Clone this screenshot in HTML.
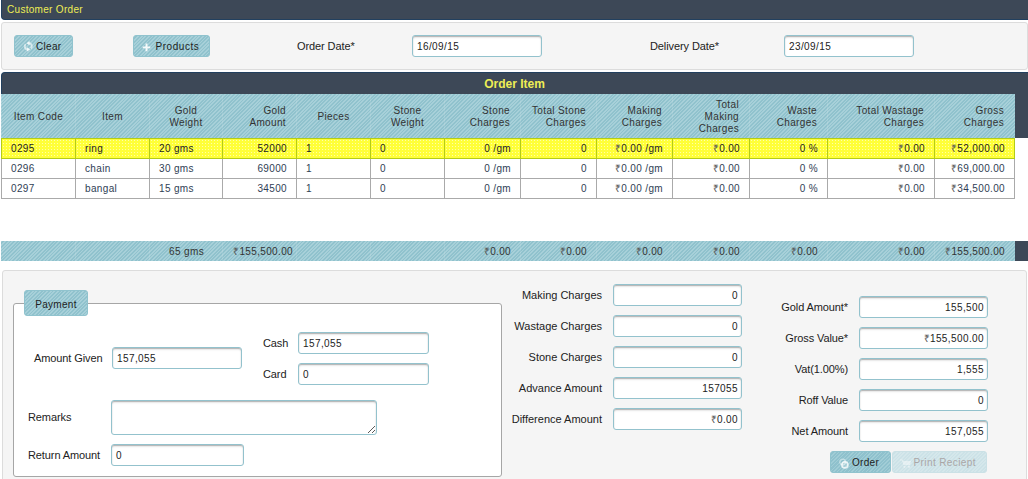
<!DOCTYPE html>
<html>
<head>
<meta charset="utf-8">
<title>Customer Order</title>
<style>
html,body{margin:0;padding:0;}
body{width:1028px;height:479px;position:relative;overflow:hidden;background:#fff;
  font-family:"Liberation Sans",sans-serif;font-size:11px;color:#222;}
.abs{position:absolute;}
.stripe{background-color:#9bc9d3;
  background-image:repeating-linear-gradient(135deg,#a7d0d9 0,#a7d0d9 1.27px,#90c2cd 1.27px,#90c2cd 2.55px);}
.stripe2{background-color:#96c6d0;
  background-image:repeating-linear-gradient(135deg,#a1cdd6 0,#a1cdd6 1.05px,#8fc1cd 1.05px,#8fc1cd 2.55px);}
.hdr{background:#3d4857;}
.j{font-size:10px;letter-spacing:0.3px;}
#title{left:1px;top:0;width:1027px;height:20px;box-sizing:border-box;border-left:1px solid #22405f;border-bottom:1px solid #22405f;border-radius:0 0 0 4px;color:#eeee55;line-height:19px;}
#title span{position:absolute;left:5px;top:0;}
.panel{background:#f5f5f5;border:1px solid #dcdcdc;border-radius:3px;box-sizing:border-box;}
#top{left:1px;top:22px;width:1027px;height:48px;}
.btn{box-sizing:border-box;border:1px solid #90c3ce;border-radius:3px;height:22px;line-height:22px;color:#222;white-space:nowrap;}
.btn span.t{position:absolute;left:21px;top:0;}
.lbl{font-size:11px;line-height:14px;letter-spacing:-0.1px;white-space:nowrap;color:#222;}
.inp{box-sizing:border-box;height:22px;width:130px;border:1px solid #93c2cd;border-radius:3px;background:#fff;
  box-shadow:inset 0 1px 1px #b4b4b4, inset 0 2px 2px rgba(0,0,0,0.08);font-size:10px;letter-spacing:0.4px;line-height:22px;padding:0 4px;color:#222;white-space:nowrap;}
.r{text-align:right;}
.inp.r{padding-right:3px;}
.ru{color:#555;}
/* table */
#gridhead{left:1px;top:72px;width:1027px;height:66px;box-sizing:border-box;border-top:1px solid #22405f;border-left:1px solid #22405f;border-radius:4px 0 0 0;}
#gridtitle{left:1px;top:72px;width:1027px;height:22px;line-height:24px;text-align:center;font-weight:bold;font-size:12px;color:#eeee55;}
#thead{left:1px;top:94px;width:1014px;height:44px;}
.th{position:absolute;top:0;height:44px;padding-top:2px;border-left:1px solid rgba(255,255,255,0.10);font-size:10px;line-height:12px;letter-spacing:0.36px;color:#333;display:flex;align-items:center;box-sizing:border-box;}
.th.c{justify-content:center;text-align:center;}
.th.rr{justify-content:flex-end;text-align:right;padding-right:10px;}
.row{position:absolute;left:0;width:1015px;height:21px;}
.td{position:absolute;top:0;height:21px;box-sizing:border-box;border:1px solid #aaa;
  font-size:10px;line-height:20px;letter-spacing:0.35px;color:#2f3e55;padding:0 9px;white-space:nowrap;}
.td.rr{text-align:right;}
.sel .td{border-color:#b3cc17;background-color:#ffff38;background-image:radial-gradient(circle at 1.5px 1.5px,#ffffa8 0.55px,rgba(255,255,168,0) 1px);background-size:3px 3px;color:#222;}
#foot{left:1px;top:241px;width:1014px;height:20px;}
#footsp{left:1015px;top:241px;width:13px;height:20px;}
.ft{position:absolute;top:0;height:20px;line-height:21px;font-size:10px;letter-spacing:0.35px;color:#333;white-space:nowrap;}
#bottom{left:2px;top:270px;width:1025px;height:215px;}
#fs{left:13px;top:303px;width:489px;height:174px;border:1px solid #a6a6a6;border-radius:3px;background:#fff;box-sizing:border-box;}
#legend{left:24px;top:290px;width:64px;height:26px;line-height:27px;text-align:center;}
.ic{position:absolute;display:block;}
.dis{color:#aaa6a6;border-color:#cbe1e6;background-color:#d0e4e9;background-image:repeating-linear-gradient(135deg,#d5e7eb 0,#d5e7eb 1.27px,#cce2e7 1.27px,#cce2e7 2.55px);}
.fsep{position:absolute;top:0;width:1px;height:20px;background:rgba(255,255,255,0.10);}
</style>
</head>
<body>
<div id="title" class="abs hdr j"><span>Customer Order</span></div>

<div id="top" class="abs panel"></div>
<div class="abs btn stripe j" style="left:14px;top:35px;width:59px;"><svg class="ic" style="left:8.1px;top:5.1px;" width="10.6" height="10.6" viewBox="0 0 11 11"><g fill="none" stroke="#fff" stroke-width="2" opacity="0.6"><path d="M6.4 2.1 A3.4 3.4 0 0 1 8.2 7.8"/><path d="M4.6 8.9 A3.4 3.4 0 0 1 2.8 3.2"/></g><g fill="#fff" opacity="0.88"><path d="M6.8 0 V4.4 L3.6 2.3 Z"/><path d="M4.2 6.6 V11 L7.4 8.7 Z"/></g></svg><span class="t">Clear</span></div>
<div class="abs btn stripe j" style="left:133px;top:35px;width:77px;"><svg class="ic" style="left:7.2px;top:5.2px;" width="12" height="12" viewBox="0 0 12 12"><path d="M1.7 6.4 H9.3 M5.5 2.6 V10.2" stroke="#fff" stroke-width="1.9" fill="none" opacity="0.9"/></svg><span class="t" style="left:21.5px;letter-spacing:0.55px;">Products</span></div>
<div class="abs lbl" style="left:297px;top:39px;">Order Date*</div>
<div class="abs inp" style="left:412px;top:35px;">16/09/15</div>
<div class="abs lbl" style="left:650px;top:39px;">Delivery Date*</div>
<div class="abs inp" style="left:784px;top:35px;">23/09/15</div>

<div id="gridhead" class="abs hdr"></div>
<div id="gridtitle" class="abs">Order Item</div>
<div id="thead" class="abs stripe">
  <div class="th c" style="left:0px;width:74px;"><span>Item Code</span></div>
  <div class="th c" style="left:74px;width:74px;"><span>Item</span></div>
  <div class="th c" style="left:148px;width:73px;"><span>Gold<br>Weight</span></div>
  <div class="th rr" style="left:221px;width:74px;"><span>Gold<br>Amount</span></div>
  <div class="th c" style="left:295px;width:74px;"><span>Pieces</span></div>
  <div class="th c" style="left:369px;width:74px;"><span>Stone<br>Weight</span></div>
  <div class="th rr" style="left:443px;width:76px;"><span>Stone<br>Charges</span></div>
  <div class="th rr" style="left:519px;width:76px;"><span>Total Stone<br>Charges</span></div>
  <div class="th rr" style="left:595px;width:76px;"><span>Making<br>Charges</span></div>
  <div class="th rr" style="left:671px;width:77px;"><span>Total<br>Making<br>Charges</span></div>
  <div class="th rr" style="left:748px;width:78px;"><span>Waste<br>Charges</span></div>
  <div class="th rr" style="left:826px;width:107px;"><span>Total Wastage<br>Charges</span></div>
  <div class="th rr" style="left:933px;width:80px;"><span>Gross<br>Charges</span></div>
</div>
<div class="row" style="top:158px;">
  <div class="td l" style="left:1px;width:75px;">0296</div>
  <div class="td l" style="left:75px;width:75px;">chain</div>
  <div class="td l" style="left:149px;width:74px;">30 gms</div>
  <div class="td rr" style="left:222px;width:75px;">69000</div>
  <div class="td l" style="left:296px;width:75px;">1</div>
  <div class="td l" style="left:370px;width:75px;">0</div>
  <div class="td rr" style="left:444px;width:77px;">0 /gm</div>
  <div class="td rr" style="left:520px;width:77px;">0</div>
  <div class="td rr" style="left:596px;width:77px;"><span class="ru">₹</span>0.00 /gm</div>
  <div class="td rr" style="left:672px;width:78px;"><span class="ru">₹</span>0.00</div>
  <div class="td rr" style="left:749px;width:79px;">0 %</div>
  <div class="td rr" style="left:827px;width:108px;"><span class="ru">₹</span>0.00</div>
  <div class="td rr" style="left:934px;width:81px;"><span class="ru">₹</span>69,000.00</div>
</div>
<div class="row" style="top:178px;">
  <div class="td l" style="left:1px;width:75px;">0297</div>
  <div class="td l" style="left:75px;width:75px;">bangal</div>
  <div class="td l" style="left:149px;width:74px;">15 gms</div>
  <div class="td rr" style="left:222px;width:75px;">34500</div>
  <div class="td l" style="left:296px;width:75px;">1</div>
  <div class="td l" style="left:370px;width:75px;">0</div>
  <div class="td rr" style="left:444px;width:77px;">0 /gm</div>
  <div class="td rr" style="left:520px;width:77px;">0</div>
  <div class="td rr" style="left:596px;width:77px;"><span class="ru">₹</span>0.00 /gm</div>
  <div class="td rr" style="left:672px;width:78px;"><span class="ru">₹</span>0.00</div>
  <div class="td rr" style="left:749px;width:79px;">0 %</div>
  <div class="td rr" style="left:827px;width:108px;"><span class="ru">₹</span>0.00</div>
  <div class="td rr" style="left:934px;width:81px;"><span class="ru">₹</span>34,500.00</div>
</div>
<div class="row sel" style="top:138px;">
  <div class="td l" style="left:1px;width:75px;">0295</div>
  <div class="td l" style="left:75px;width:75px;">ring</div>
  <div class="td l" style="left:149px;width:74px;">20 gms</div>
  <div class="td rr" style="left:222px;width:75px;">52000</div>
  <div class="td l" style="left:296px;width:75px;">1</div>
  <div class="td l" style="left:370px;width:75px;">0</div>
  <div class="td rr" style="left:444px;width:77px;">0 /gm</div>
  <div class="td rr" style="left:520px;width:77px;">0</div>
  <div class="td rr" style="left:596px;width:77px;"><span class="ru">₹</span>0.00 /gm</div>
  <div class="td rr" style="left:672px;width:78px;"><span class="ru">₹</span>0.00</div>
  <div class="td rr" style="left:749px;width:79px;">0 %</div>
  <div class="td rr" style="left:827px;width:108px;"><span class="ru">₹</span>0.00</div>
  <div class="td rr" style="left:934px;width:81px;"><span class="ru">₹</span>52,000.00</div>
</div>
<div id="foot" class="abs stripe">
  <div class="fsep" style="left:74px;"></div>
  <div class="fsep" style="left:148px;"></div>
  <div class="fsep" style="left:221px;"></div>
  <div class="fsep" style="left:295px;"></div>
  <div class="fsep" style="left:369px;"></div>
  <div class="fsep" style="left:443px;"></div>
  <div class="fsep" style="left:519px;"></div>
  <div class="fsep" style="left:595px;"></div>
  <div class="fsep" style="left:671px;"></div>
  <div class="fsep" style="left:748px;"></div>
  <div class="fsep" style="left:826px;"></div>
  <div class="fsep" style="left:933px;"></div>
  <div class="ft" style="right:811px;">65 gms</div>
  <div class="ft" style="right:722px;"><span class="ru">₹</span>155,500.00</div>
  <div class="ft" style="right:504px;"><span class="ru">₹</span>0.00</div>
  <div class="ft" style="right:428px;"><span class="ru">₹</span>0.00</div>
  <div class="ft" style="right:352px;"><span class="ru">₹</span>0.00</div>
  <div class="ft" style="right:275px;"><span class="ru">₹</span>0.00</div>
  <div class="ft" style="right:197px;"><span class="ru">₹</span>0.00</div>
  <div class="ft" style="right:90px;"><span class="ru">₹</span>0.00</div>
  <div class="ft" style="right:10px;"><span class="ru">₹</span>155,500.00</div>
</div>
<div id="footsp" class="abs hdr"></div>

<div id="bottom" class="abs panel"></div>
<div id="fs" class="abs"></div>
<div id="legend" class="abs btn stripe j">Payment</div>

<div class="abs lbl" style="left:34px;top:351px;">Amount Given</div>
<div class="abs inp" style="left:112px;top:347px;">157,055</div>
<div class="abs lbl" style="left:263px;top:336px;">Cash</div>
<div class="abs inp" style="left:298px;top:332px;width:131px;">157,055</div>
<div class="abs lbl" style="left:263px;top:367px;">Card</div>
<div class="abs inp" style="left:298px;top:363px;width:131px;">0</div>
<div class="abs lbl" style="left:28px;top:410px;">Remarks</div>
<div class="abs inp" style="left:111px;top:400px;width:266px;height:35px;"></div>
<svg class="ic" style="left:367px;top:425px;" width="9" height="9" viewBox="0 0 9 9" shape-rendering="crispEdges"><g fill="#5a5a5a"><rect x="1" y="7" width="1" height="1"/><rect x="2" y="6" width="1" height="1"/><rect x="3" y="5" width="1" height="1"/><rect x="4" y="4" width="1" height="1"/><rect x="5" y="3" width="1" height="1"/><rect x="6" y="2" width="1" height="1"/><rect x="7" y="1" width="1" height="1"/><rect x="5" y="7" width="1" height="1"/><rect x="6" y="6" width="1" height="1"/><rect x="7" y="5" width="1" height="1"/></g></svg>
<div class="abs lbl" style="left:28px;top:448px;">Return Amount</div>
<div class="abs inp" style="left:111px;top:444px;width:133px;">0</div>

<div class="abs lbl r" style="left:481px;width:121px;letter-spacing:0;top:288px;">Making Charges</div>
<div class="abs inp r" style="left:613px;top:284px;width:129px;">0</div>
<div class="abs lbl r" style="left:481px;width:121px;letter-spacing:0;top:319px;">Wastage Charges</div>
<div class="abs inp r" style="left:613px;top:315px;width:129px;">0</div>
<div class="abs lbl r" style="left:481px;width:121px;letter-spacing:0;top:350px;">Stone Charges</div>
<div class="abs inp r" style="left:613px;top:346px;width:129px;">0</div>
<div class="abs lbl r" style="left:481px;width:121px;letter-spacing:0;top:381px;">Advance Amount</div>
<div class="abs inp r" style="left:613px;top:377px;width:129px;">157055</div>
<div class="abs lbl r" style="left:481px;width:121px;letter-spacing:0;top:412px;">Difference Amount</div>
<div class="abs inp r" style="left:613px;top:408px;width:129px;"><span class="ru">₹</span>0.00</div>

<div class="abs lbl r" style="left:727px;width:121px;top:300px;">Gold Amount*</div>
<div class="abs inp r" style="left:859px;top:296px;width:129px;">155,500</div>
<div class="abs lbl r" style="left:727px;width:121px;top:331px;">Gross Value*</div>
<div class="abs inp r" style="left:859px;top:327px;width:129px;"><span class="ru">₹</span>155,500.00</div>
<div class="abs lbl r" style="left:727px;width:121px;top:362px;">Vat(1.00%)</div>
<div class="abs inp r" style="left:859px;top:358px;width:129px;">1,555</div>
<div class="abs lbl r" style="left:727px;width:121px;top:393px;">Roff Value</div>
<div class="abs inp r" style="left:859px;top:389px;width:129px;">0</div>
<div class="abs lbl r" style="left:727px;width:121px;top:424px;">Net Amount</div>
<div class="abs inp r" style="left:859px;top:420px;width:129px;">157,055</div>

<div class="abs btn stripe2 j" style="left:830px;top:451px;width:61px;"><svg class="ic" style="left:7px;top:4.6px;" width="13" height="13" viewBox="0 0 13 13"><circle cx="4.6" cy="5" r="2.8" fill="none" stroke="#fff" stroke-width="1.3" opacity="0.45"/><circle cx="6.9" cy="7.9" r="3" fill="#fff" fill-opacity="0.25" stroke="#fff" stroke-width="1.6" opacity="0.8"/></svg><span class="t">Order</span></div>
<div class="abs btn j dis" style="left:892px;top:451px;width:95px;"><svg class="ic" style="left:7px;top:7px;" width="12" height="10" viewBox="0 0 12 10"><g fill="#fff" opacity="0.45"><path d="M0 0.6 H2.6 L3.2 2 H11 L10 6 H3.4 L2 1.6 H0 Z"/><circle cx="4.4" cy="7.8" r="1.1"/><circle cx="9" cy="7.8" r="1.1"/></g></svg><span class="t" style="left:20.5px;letter-spacing:0.4px;">Print Reciept</span></div>

</body>
</html>
